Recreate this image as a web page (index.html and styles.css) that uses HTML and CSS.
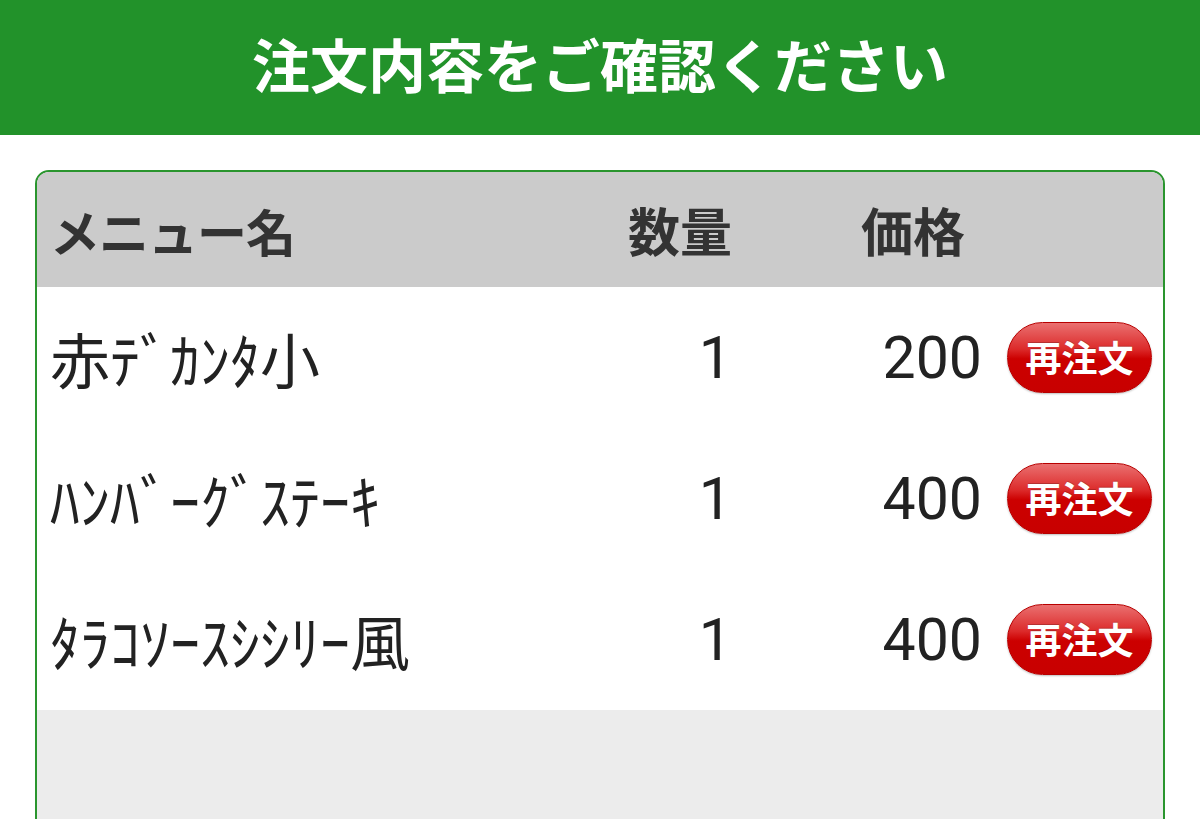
FILE: index.html
```html
<!DOCTYPE html>
<html lang="ja">
<head>
  <meta charset="UTF-8">
  <meta name="viewport" content="width=device-width, initial-scale=1">
  <title>注文内容確認</title>
  <link rel="stylesheet" href="styles.css">
</head>
<body>

  <!-- ヘッダー -->
  <header class="page-title">注文内容をご確認ください</header>

  <!-- 注文一覧 -->
  <div class="order-box">
    <div class="order-row order-head">
      <div class="col-name">メニュー名</div>
      <div class="col-qty">数量</div>
      <div class="col-price">価格</div>
      <div></div>
    </div>

    <div class="order-row">
      <div class="col-name">赤ﾃﾞｶﾝﾀ小</div>
      <div class="col-qty">1</div>
      <div class="col-price">200</div>
      <div class="col-btn"><button class="reorder">再注文</button></div>
    </div>
    <div class="order-row">
      <div class="col-name">ﾊﾝﾊﾞｰｸﾞｽﾃｰｷ</div>
      <div class="col-qty">1</div>
      <div class="col-price">400</div>
      <div class="col-btn"><button class="reorder">再注文</button></div>
    </div>
    <div class="order-row">
      <div class="col-name">ﾀﾗｺｿｰｽｼｼﾘｰ風</div>
      <div class="col-qty">1</div>
      <div class="col-price">400</div>
      <div class="col-btn"><button class="reorder">再注文</button></div>
    </div>

    <div class="order-foot"></div>
  </div>

</body>
</html>
```

FILE: styles.css
```css
/* — リセット — */
* { margin:0; padding:0; box-sizing:border-box; }
html, body { overflow:hidden; }
body {
  font-family: "Noto Sans CJK JP", "Noto Sans", sans-serif;
  background: #fff;
  color: #222;
}

/* — タイトルバー — */
.page-title {
  height: 135px;
  background: #22922a;
  color: #fff;
  font-size: 58px;
  font-weight: bold;
  display: flex;
  align-items: center;
  justify-content: center;
  padding-bottom: 10px;
}

/* — 注文ボックス — */
.order-box {
  margin: 35px;
  border: 2px solid #2a952e;
  border-radius: 14px;
  overflow: hidden;
}
.order-row {
  display: grid;
  grid-template-columns: 1fr 132px 250px 170px;
  align-items: center;
  height: 141px;
  padding: 0 11px 0 13px;
  background: #fff;
}
.order-head {
  height: 115px;
  background: #cbcbcb;
  color: #333;
  font-size: 51px;
  font-weight: bold;
}
.order-head .col-price { padding-right: 17px; }

.col-name {
  font-size: 60px;
  white-space: nowrap;
}
.order-head .col-name { font-size: 50px; letter-spacing: -1px; }
.col-qty, .col-price {
  text-align: right;
  font-family: Roboto, "Noto Sans CJK JP", sans-serif;
  font-size: 59px;
}
.order-head .col-qty,
.order-head .col-price {
  font-family: "Noto Sans CJK JP", sans-serif;
  font-size: 52px;
}
.col-btn {
  display: flex;
  justify-content: flex-end;
}

/* — 再注文ボタン — */
.reorder {
  width: 145px;
  height: 71px;
  border: 1px solid #b80000;
  border-radius: 36px;
  background: linear-gradient(#ea7070 0%, #dc2a2a 38%, #cc0000 52%, #c80000 100%);
  box-shadow: 0 1px 2px rgba(0,0,0,0.25);
  color: #fff;
  font-family: "Noto Sans CJK JP", sans-serif;
  font-size: 36px;
  font-weight: bold;
  line-height: 1;
  padding-bottom: 3px;
  cursor: pointer;
  text-shadow: 0 -1px 0 rgba(0,0,0,0.2);
}

.order-foot {
  height: 200px;
  background: #ececec;
}
```
